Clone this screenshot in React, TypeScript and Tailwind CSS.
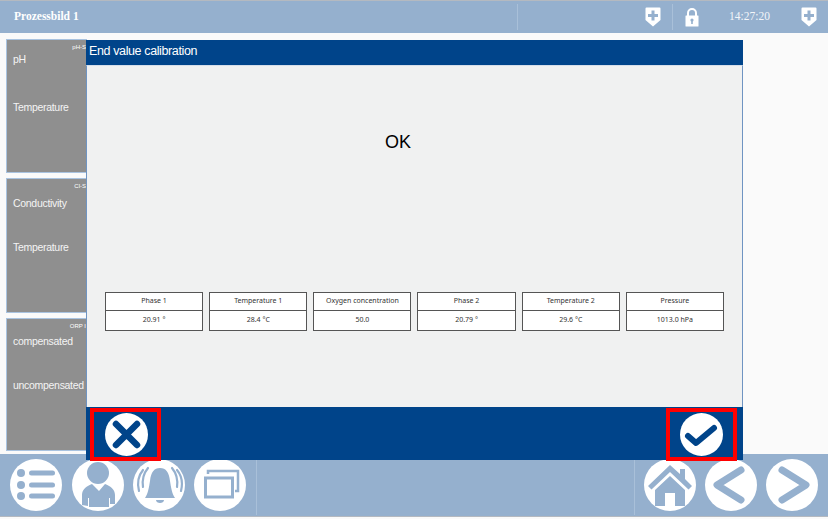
const sans = "font-['Liberation_Sans',Arial,sans-serif]";

function Shield() {
  return (
    <svg width="16" height="20" viewBox="0 0 16 20">
      <path d="M1.5 0.5H14.5A1 1 0 0 1 15.5 1.5V13L8 19.5L0.5 13V1.5A1 1 0 0 1 1.5 0.5Z" fill="#fff" />
      <path d="M6.5 3.5H9.5V7H13V10H9.5V13.5H6.5V10H3V7H6.5Z" fill="#95b0ce" />
    </svg>
  );
}

function Lock() {
  return (
    <svg width="14" height="19" viewBox="0 0 14 19">
      <path d="M3 8V5A4 4 0 0 1 11 5V8" fill="none" stroke="#fff" strokeWidth="2" />
      <rect x="0.5" y="7.5" width="13" height="11" rx="0.5" fill="#fff" />
      <circle cx="7" cy="12" r="1.6" fill="#95b0ce" />
      <rect x="6.2" y="12" width="1.6" height="4" fill="#95b0ce" />
    </svg>
  );
}

function NavCircle({ children, className = "" }: { children: React.ReactNode; className?: string }) {
  return (
    <svg width="52" height="52" viewBox="0 0 52 52" className={`shrink-0 ${className}`}>
      <circle cx="26" cy="26" r="26" fill="#fff" />
      {children}
    </svg>
  );
}

const Panel = ({ tag, a, b, h, gap }: { tag: string; a: string; b: string; h: string; gap: string }) => (
  <div className={`relative w-[81px] overflow-hidden border border-[#a9c3e0] bg-[#8f8f8f] pl-[6px] text-[10.5px] tracking-[-0.3px] text-[#f4f4f4] ${h}`}>
    <div className="absolute right-0 top-[4px] whitespace-nowrap text-[6px] leading-[7px] tracking-normal text-white">{tag}</div>
    <div className={`whitespace-nowrap leading-[14px] ${gap}`}>{a}</div>
    <div className="whitespace-nowrap leading-[14px]">{b}</div>
  </div>
);

const readings = [
  ["Phase 1", "20.91 °"],
  ["Temperature 1", "28.4 °C"],
  ["Oxygen concentration", "50.0"],
  ["Phase 2", "20.79 °"],
  ["Temperature 2", "29.6 °C"],
  ["Pressure", "1013.0 hPa"],
];

export default function App() {
  return (
    <div className={`relative flex h-[519px] w-[828px] flex-col overflow-hidden bg-[#fafafa] ${sans}`}>
      {/* Top bar */}
      <header className="flex h-[33px] shrink-0 items-center border-t border-[#b4b9c0] bg-[#95b0ce] text-white">
        <div className="w-[517px] pl-[14px] font-['Liberation_Serif',serif] text-[11.5px] font-bold">Prozessbild 1</div>
        <div className="h-[26px] w-[128px] border-l border-[#a9c0d9]" />
        <div className="flex w-[27px] justify-start"><Shield /></div>
        <div className="h-[26px] border-l border-[#a9c0d9]" />
        <div className="ml-[12px] flex w-[44px]"><Lock /></div>
        <div className="w-[72px] font-['Liberation_Serif',serif] text-[11.5px] text-[#f2f5f9]">14:27:20</div>
        <Shield />
      </header>

      {/* Sensor panels */}
      <main className="flex min-h-0 flex-1 flex-col gap-[5px] pl-[6px] pt-[6px]">
        <Panel tag="pH-S" a="pH" b="Temperature" h="h-[134px] pt-[12px]" gap="mb-[34px]" />
        <Panel tag="Cl-S" a="Conductivity" b="Temperature" h="h-[135px] pt-[17px]" gap="mb-[30px]" />
        <Panel tag="ORP I" a="compensated" b="uncompensated" h="h-[133px] pt-[15px]" gap="mb-[30px]" />
      </main>

      {/* Bottom bar */}
      <footer className="mb-[2px] flex h-[63px] shrink-0 items-center border-b border-[#b4b9c0] bg-[#95b0ce] pl-[10px] pr-[10px]">
        <div className="flex gap-[9px]">
          <NavCircle className="mr-px">
            <g fill="#95b0ce">
              <circle cx="11" cy="14" r="4" /><circle cx="11" cy="26" r="4" /><circle cx="11" cy="37" r="4" />
              <rect x="19" y="11.5" width="26" height="5" rx="2.5" />
              <rect x="19" y="23.5" width="26" height="5" rx="2.5" />
              <rect x="19" y="34.5" width="26" height="5" rx="2.5" />
            </g>
          </NavCircle>
          <NavCircle>
            <g fill="#95b0ce">
              <circle cx="26" cy="14" r="11" />
              <path d="M10 46V36C10 30 15 27 20 25L27 32L33 25C38 27 43 30 43 36V45H38V39H37V48H17V39H16V47Z" />
            </g>
          </NavCircle>
          <NavCircle>
            <g fill="#95b0ce">
              <path d="M12 39C15 35 16 28 17 22C18 13 21 9 27 9C33 9 36 13 37 22C38 28 39 35 42 39Z" />
              <path d="M23 41H31C31 45 23 45 23 41Z" />
              <g fill="none" stroke="#95b0ce" strokeWidth="2.2" strokeLinecap="round">
                <path d="M10 11C5 17 4 24 6 32" />
                <path d="M15 9C10 15 9 21 10 28" />
                <path d="M44 11C49 17 50 24 48 32" />
                <path d="M39 9C44 15 45 21 44 28" />
              </g>
            </g>
          </NavCircle>
          <NavCircle>
            <g fill="none" stroke="#95b0ce">
              <path d="M14 15V12H44V32H41" strokeWidth="2.5" />
              <rect x="11.5" y="19" width="27" height="19" strokeWidth="3" />
            </g>
          </NavCircle>
        </div>
        <div className="ml-[10px] h-[60px] flex-1 border-x border-[#a9c0d9]" />
        <div className="ml-[9px] flex gap-[9px]">
          <NavCircle>
            <g fill="#95b0ce">
              <path d="M4 27L26 6L36 15V10H41V20L48 27L44.5 30.5L26 13L7.5 30.5Z" />
              <path d="M11 31L26 17L41 31V47H31V34H21V47H11Z" />
            </g>
          </NavCircle>
          <NavCircle>
            <path d="M36 11L12 26L36 41" fill="none" stroke="#95b0ce" strokeWidth="7" strokeLinecap="round" strokeLinejoin="round" />
          </NavCircle>
          <NavCircle>
            <path d="M16 11L40 26L16 41" fill="none" stroke="#95b0ce" strokeWidth="7" strokeLinecap="round" strokeLinejoin="round" />
          </NavCircle>
        </div>
      </footer>

      {/* Calibration dialog */}
      <section className="absolute left-[86px] top-[40px] flex h-[420px] w-[657px] flex-col bg-[#f0f1f1]">
        <div className="flex h-[25px] shrink-0 items-center bg-[#00448a] pb-[2px] pl-[3px] text-[12.5px] tracking-[-0.38px] text-white">End value calibration</div>
        <div className="flex min-h-0 flex-1 flex-col border-x border-t border-[#6f94c2] border-t-[#d5deea]">
          <div className="pl-[298px] pt-[66px] text-[18px] leading-[20px] text-black">OK</div>
          <div className="mt-auto mb-[76px] grid grid-cols-6 gap-x-[6px] px-[18px] font-['Noto_Sans',sans-serif] text-[7px] text-[#333]">
            {readings.map(([label, value]) => (
              <div key={label} className="h-[39px] border border-[#555] bg-white text-center">
                <div className="flex h-[18px] items-center justify-center border-b border-[#555]">{label}</div>
                <div className="flex h-[19px] items-center justify-center">{value}</div>
              </div>
            ))}
          </div>
        </div>
        <div className="flex h-[53px] shrink-0 items-start justify-between bg-[#00448a] pl-[4px] pr-[6px]">
          <div className="mt-px flex h-[53px] w-[71px] items-center justify-center border-[4px] border-[#ff0000]">
            <svg width="43" height="43" viewBox="0 0 43 43" className="ml-px">
              <circle cx="21.5" cy="21.5" r="21.5" fill="#fff" />
              <path d="M11 11L32 32M32 11L11 32" stroke="#00448a" strokeWidth="6.5" strokeLinecap="round" />
            </svg>
          </div>
          <div className="mt-px flex h-[53px] w-[71px] items-center justify-center border-[4px] border-[#ff0000]">
            <svg width="43" height="43" viewBox="0 0 43 43">
              <circle cx="21.5" cy="21.5" r="21.5" fill="#fff" />
              <path d="M8 23L16 30L34 15" fill="none" stroke="#00448a" strokeWidth="6" strokeLinecap="round" strokeLinejoin="round" />
            </svg>
          </div>
        </div>
      </section>
    </div>
  );
}
